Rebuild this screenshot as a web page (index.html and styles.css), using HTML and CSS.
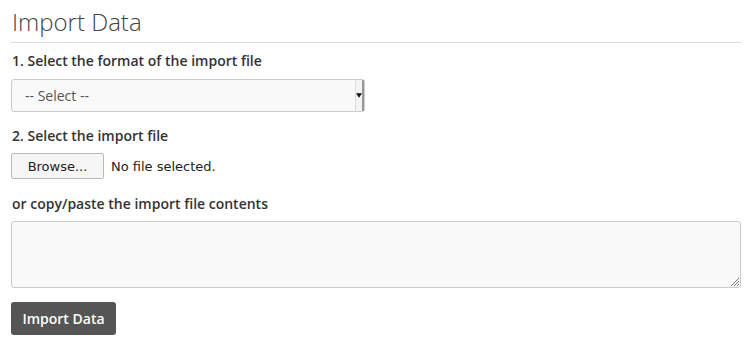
FILE: index.html
```html
<!DOCTYPE html>
<html>
<head>
<meta charset="utf-8">
<link rel="stylesheet" href="styles.css">
</head>
<body>
<div class="page">
  <h1 class="title">Import Data</h1>
  <form class="form">
    <div class="group">
      <label class="label">1. Select the format of the import file</label>
      <div class="select">
        <span class="select-text">-- Select --</span>
        <span class="select-arrow"><svg width="7" height="5" viewBox="0 0 7 5"><path d="M0 0h7L3.5 5z" fill="#111"/></svg></span>
      </div>
    </div>
    <div class="group group-file">
      <label class="label">2. Select the import file</label>
      <div class="file">
        <span class="browse">Browse...</span>
        <span class="file-text">No file selected.</span>
      </div>
    </div>
    <div class="group">
      <label class="label">or copy/paste the import file contents</label>
      <div class="textarea">
        <svg class="grip" width="9" height="9" viewBox="0 0 9 9"><path d="M9 1L1 9M9 4L4 9M9 7L7 9" stroke="#777" stroke-width="1"/></svg>
      </div>
    </div>
    <div class="actions">
      <span class="btn">Import Data</span>
    </div>
  </form>
</div>
</body>
</html>
```
FILE: styles.css
```css
html, body {
  margin: 0;
  padding: 0;
  background: #fff;
}
.page {
  padding: 0 8px 0 11px;
  font-family: "Open Sans", "Liberation Sans", sans-serif;
  color: #333;
}
.title {
  margin: 0;
  padding: 5px 0 0 1px;
  height: 37px;
  font-size: 24px;
  font-weight: 300;
  color: #444;
  line-height: 34px;
  border-bottom: 1px solid #ddd;
  box-sizing: content-box;
}
.form {
  display: flex;
  flex-direction: column;
}
.group {
  display: flex;
  flex-direction: column;
  margin-top: 15px;
}
.group:first-child {
  margin-top: 8px;
}
.group-file {
  margin-top: 14px;
}
.label {
  font-size: 14px;
  font-weight: 600;
  line-height: 20px;
  margin: 0 0 7px 1px;
}
.group:first-child .label {
  margin-bottom: 8px;
}
.select {
  width: 354px;
  height: 33px;
  border: 1px solid #ccc;
  border-radius: 3px;
  background: #f9f9f9;
  display: flex;
  align-items: center;
  justify-content: space-between;
  box-sizing: border-box;
}
.select-text {
  font-size: 14px;
  color: #555;
  padding-left: 13px;
}
.select-arrow {
  width: 6px;
  height: 31px;
  border-left: 1px solid #ddd;
  border-right: 2px solid #999;
  background: #f4f4f4;
  display: flex;
  align-items: center;
  justify-content: center;
}
.file {
  display: flex;
  align-items: center;
  gap: 7px;
  height: 26px;
}
.browse {
  width: 93px;
  height: 26px;
  box-sizing: border-box;
  border: 1px solid #bbb;
  border-radius: 2px;
  background: #f6f6f6;
  font-family: "DejaVu Sans", sans-serif;
  font-size: 13px;
  color: #222;
  display: flex;
  align-items: center;
  justify-content: center;
}
.file-text {
  font-family: "DejaVu Sans", sans-serif;
  font-size: 13px;
  color: #222;
}
.textarea {
  position: relative;
  height: 67px;
  border: 1px solid #ccc;
  border-radius: 3px;
  background: #f9f9f9;
  box-sizing: border-box;
}
.grip {
  position: absolute;
  right: 1px;
  bottom: 1px;
}
.actions {
  margin-top: 14px;
}
.btn {
  display: inline-flex;
  align-items: center;
  justify-content: center;
  width: 105px;
  height: 33px;
  background: #555;
  color: #fff;
  border-radius: 3px;
  font-size: 14px;
  font-weight: 600;
}
```
